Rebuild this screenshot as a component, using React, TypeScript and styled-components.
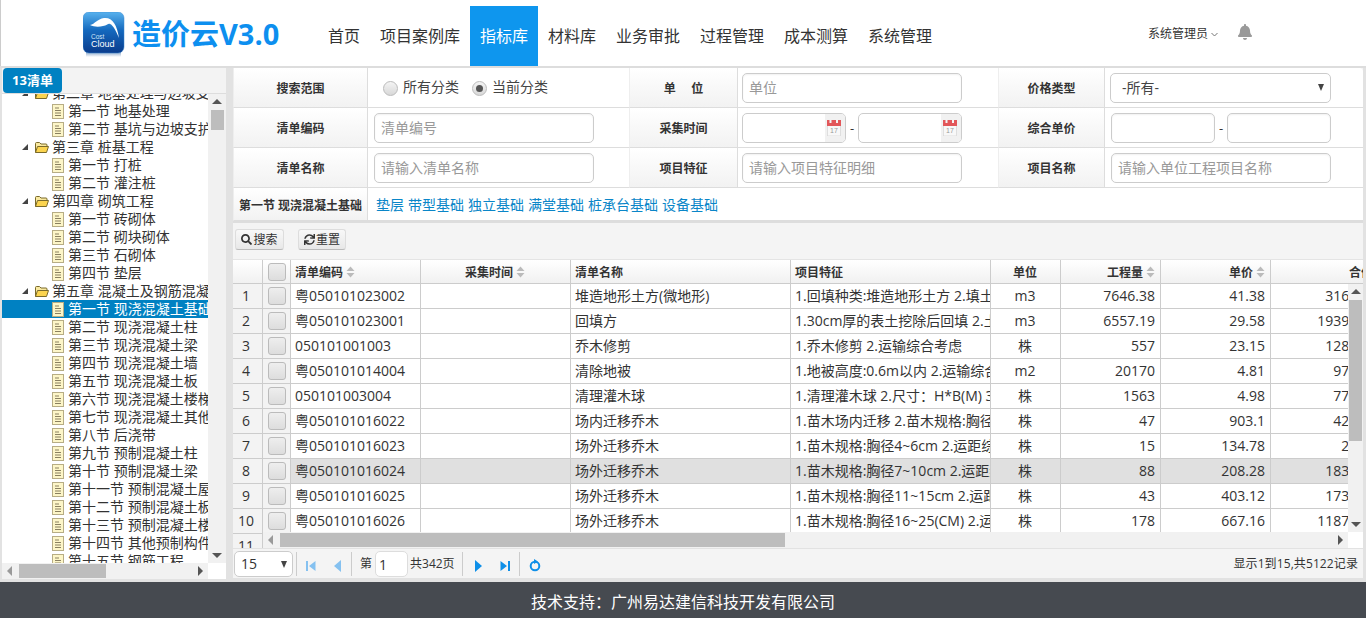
import React from "react";
import styled, { createGlobalStyle } from "styled-components";
import { FaBell, FaSearch, FaSync } from "react-icons/fa";

const Global = createGlobalStyle`
  html, body { margin: 0; padding: 0; background: #ddd; }
  body { font-family: "Open Sans", "Noto Sans CJK SC", sans-serif; font-size: 14px; color: #333; }
  * { box-sizing: border-box; }
  input { font-family: "Open Sans", "Noto Sans CJK SC", sans-serif; }
`;

const Page = styled.div`
  width: 1366px; height: 618px; display: flex; flex-direction: column; overflow: hidden; background: #ddd;
`;
const Header = styled.header`
  height: 66px; flex: none; display: flex; background: #fff; border-left: 1px solid #ccc; padding-left: 82px;
`;
const LogoWrap = styled.div`
  width: 42px; height: 46px; margin-top: 12px; flex: none;
`;
const Brand = styled.div`
  margin: 12px 0 0 7px; width: 186px; height: 44px; line-height: 44px; font-size: 29px; font-weight: 700; color: #0d8fef; white-space: nowrap;
`;
const Nav = styled.nav` display: flex; height: 60px; margin-top: 6px; `;
const NavItem = styled.div<{ $active?: boolean }>`
  padding: 0 10px; line-height: 60px; font-size: 16px; white-space: nowrap;
  color: ${p => (p.$active ? "#fff" : "#333")};
  background: ${p => (p.$active ? "#0e96ee" : "transparent")};
`;
const UserArea = styled.div`
  margin-left: auto; padding-right: 113px; display: flex; align-items: flex-start; height: 66px;
`;
const UserName = styled.div`
  margin-top: 25px; font-size: 12px; line-height: 18px; color: #333; display: flex; align-items: center; gap: 3px;
`;
const BellWrap = styled.div` margin: 24px 0 0 19px; color: #9a9a9a; font-size: 16px; line-height: 16px; `;

const Body = styled.div`
  flex: none; height: 514px; margin-top: 2px; display: flex; align-items: flex-start; padding-left: 2px; background: #e2e2e2;
`;
const Sidebar = styled.aside`
  width: 224px; height: 511px; flex: none; background: #f2f2f2; display: flex; flex-direction: column;
`;
const TabBar = styled.div`
  height: 26px; flex: none; background: #f3f3f3; border-bottom: 1px solid #ddd; padding-left: 1px;
`;
const Tab = styled.div`
  width: 59px; height: 25px; background: #0081c2; color: #fff; font-weight: 700; font-size: 13px; line-height: 25px; text-align: center; border-radius: 4px;
`;
const TreeArea = styled.div` height: 469px; flex: none; display: flex; background: #fff; `;
const TreeClip = styled.div` width: 206px; flex: none; overflow: hidden; `;
const TreeList = styled.div` margin-top: -10px; `;
const TreeRow = styled.div<{ $sel?: boolean; $chapter?: boolean }>`
  height: 18px; display: flex; align-items: center; white-space: nowrap; line-height: 18px; font-size: 14px;
  padding-left: ${p => (p.$chapter ? "20px" : "50px")};
  background: ${p => (p.$sel ? "#0081c2" : "transparent")};
  color: ${p => (p.$sel ? "#fff" : "#333")};
`;
const TreeArrow = styled.span`
  width: 0; height: 0; border-style: solid; border-width: 0 0 6px 6px; border-color: transparent transparent #444 transparent; margin-right: 6px; flex: none;
`;
const IconSlot = styled.span` flex: none; display: inline-flex; margin-right: 2px; `;
const LeafSlot = styled.span` flex: none; display: inline-flex; margin-right: 4px; `;

const VBar = styled.div<{ $w: number; $h?: number }>`
  width: ${p => p.$w}px; flex: none; background: #f1f1f1; display: flex; flex-direction: column; align-items: center; padding: 5px 0;
  height: ${p => (p.$h ? `${p.$h}px` : "auto")};
`;
const VThumb = styled.div<{ $h: number; $top: number }>`
  width: 13px; height: ${p => p.$h}px; margin-top: ${p => p.$top}px; background: #bdbdbd; flex: none;
`;
const ArrowUp = styled.span`
  width: 0; height: 0; border-left: 5px solid transparent; border-right: 5px solid transparent; border-bottom: 5px solid #555; flex: none;
`;
const ArrowDown = styled.span`
  width: 0; height: 0; border-left: 5px solid transparent; border-right: 5px solid transparent; border-top: 5px solid #555; margin-top: auto; flex: none;
`;
const HBarRow = styled.div<{ $h: number }>` height: ${p => p.$h}px; flex: none; display: flex; background: #fff; `;
const HBar = styled.div`
  flex: 1; background: #f1f1f1; display: flex; align-items: center; padding: 0 5px;
`;
const Corner = styled.div` width: 18px; flex: none; background: #fff; `;
const ArrowLeft = styled.span`
  width: 0; height: 0; border-top: 5px solid transparent; border-bottom: 5px solid transparent; border-right: 5px solid #9a9a9a; flex: none;
`;
const ArrowRight = styled.span`
  width: 0; height: 0; border-top: 5px solid transparent; border-bottom: 5px solid transparent; border-left: 5px solid #555; margin-left: auto; flex: none;
`;
const HThumb = styled.div<{ $w: number; $left: number }>`
  height: 14px; width: ${p => p.$w}px; margin-left: ${p => p.$left}px; background: #bdbdbd; flex: none;
`;

const Main = styled.main`
  margin-left: 7px; width: 1130px; height: 510px; flex: none; display: flex; flex-direction: column; background: #f4f4f4;
`;
const SearchGrid = styled.div`
  display: grid; flex: none; grid-template-columns: 135px 261px 109px 260px 107px 258px; grid-template-rows: 40px 40px 40px 33px;
  background: #fff; border-radius: 4px 4px 0 0; height: 154px; border-bottom: 1px solid #ddd;
`;
const Label = styled.div<{ $low?: boolean }>`
  display: flex; align-items: center; justify-content: center; font-weight: 700; font-size: 12px; white-space: pre; color: #333;
  background: linear-gradient(#fff, #f2f2f2); border-bottom: 1px solid #ddd; border-right: 1px solid #ddd; border-left: 1px solid #eee;
  padding-top: ${p => (p.$low ? "1px" : "0")};
`;
const Field = styled.div<{ $pad: number }>`
  display: flex; align-items: center; padding-left: ${p => p.$pad}px; border-bottom: 1px solid #ddd;
`;
const LinkField = styled(Field)`
  grid-column: 2 / 7; gap: 4px; white-space: nowrap; padding-top: 1px;
`;
const CatLink = styled.a` color: #0a86c8; font-size: 14px; line-height: 20px; `;
const RadioOption = styled.label`
  display: flex; align-items: center; gap: 5px; font-size: 14px; line-height: 18px; color: #444; margin-right: 13px;
`;
const RadioGroup = styled.div` display: flex; padding: 0 0 2px 10px; `;
const RadioDot = styled.span<{ $on?: boolean }>`
  width: 15px; height: 15px; border-radius: 50%; border: 1px solid #bbb; margin-top: 3px; flex: none; display: flex; align-items: center; justify-content: center;
  background: linear-gradient(#f4f4f4, #d8d8d8);
  &::after { content: ""; width: 7px; height: 7px; border-radius: 50%; background: ${p => (p.$on ? "#555" : "transparent")}; }
`;
const TextInput = styled.input<{ $w?: number }>`
  width: ${p => p.$w ?? 220}px; height: 30px; border: 1px solid #ccc; border-radius: 5px; padding: 0 6px; font-size: 14px; color: #333; outline: none;
  box-shadow: inset 0 1px 2px rgba(0,0,0,.06); background: #fff;
  &::placeholder { color: #999; opacity: 1; }
`;
const SelectBox = styled.div`
  width: 221px; height: 30px; border: 1px solid #ccc; border-radius: 5px; display: flex; align-items: center; justify-content: space-between;
  padding: 0 6px 0 11px; font-size: 14px; color: #444; background: #fff; line-height: 20px;
`;
const Caret = styled.span`
  width: 0; height: 0; border-left: 3.5px solid transparent; border-right: 3.5px solid transparent; border-top: 7px solid #444;
`;
const DateBox = styled.div`
  width: 104px; height: 30px; border: 1px solid #ccc; border-radius: 5px; overflow: hidden; display: flex; justify-content: flex-end; background: #fff;
`;
const DateIcon = styled.div`
  width: 20px; background: #f1f1f1; display: flex; align-items: center; justify-content: center; padding-right: 2px;
`;
const RangeDash = styled.span` width: 12px; text-align: center; font-size: 13px; color: #333; `;

const Toolbar = styled.div`
  flex: none; height: 37px; border-top: 1px solid #ddd; background: #f4f4f4; display: flex; padding: 6px 0 0 2px; gap: 14px;
`;
const ToolBtn = styled.button<{ $w: number }>`
  width: ${p => p.$w}px; height: 21px; padding: 0; border: 1px solid #ddd; border-bottom-color: #bbb; border-radius: 3px; background: linear-gradient(#f8f8f8, #e8e8e8);
  font-family: inherit; font-size: 12px; line-height: 18px; color: #333; display: flex; align-items: center; justify-content: center; gap: 1px;
  svg { font-size: 11px; }
`;

const TableArea = styled.div`
  flex: none; height: 289px; display: flex; flex-direction: column; background: #fff;
`;
const HeadRow = styled.div`
  height: 25px; flex: none; display: flex; overflow: hidden; background: linear-gradient(#fff, #f1f1f1); border-top: 1px solid #e4e4e4; border-bottom: 1px solid #ccc;
`;
const HeadCell = styled.div<{ $w: number; $align?: string }>`
  width: ${p => p.$w}px; flex: none; display: flex; align-items: center; gap: 3px; padding: 0 5px 0 4px; font-weight: 700; font-size: 12px; white-space: nowrap; border-right: 1px solid #ccc;
  justify-content: ${p => p.$align ?? "flex-start"};
`;
const Sort = styled.svg` flex: none; `;
const TableBody = styled.div` flex: 1; display: flex; min-height: 0; `;
const NumCol = styled.div` width: 30px; flex: none; overflow: hidden; background: #f3f3f3; `;
const NumCell = styled.div`
  height: 25px; line-height: 24px; text-align: center; border-bottom: 1px solid #ccc; border-right: 1px solid #ccc; font-size: 14px; padding-right: 3px;
`;
const DataCol = styled.div` width: 1085px; flex: none; display: flex; flex-direction: column; `;
const RowsClip = styled.div` height: 248px; flex: none; overflow: hidden; `;
const DataRow = styled.div<{ $on?: boolean }>`
  height: 25px; width: 1128px; display: flex; background: ${p => (p.$on ? "#e0e0e0" : "#fff")}; border-bottom: 1px solid #ccc;
`;
const Cell = styled.div<{ $w: number; $align?: string }>`
  width: ${p => p.$w}px; flex: none; padding: 0 5px 0 4px; line-height: 24px; font-size: 14px; white-space: nowrap; overflow: hidden; border-right: 1px solid #ccc;
  text-align: ${p => p.$align ?? "left"};
`;
const CheckCell = styled.div<{ $w: number }>`
  width: ${p => p.$w}px; flex: none; display: flex; align-items: center; justify-content: center; border-right: 1px solid #ccc; background: #f3f3f3;
`;
const HeadCheck = styled(CheckCell)` background: transparent; `;
const Check = styled.span`
  width: 18px; height: 18px; border: 1px solid #bbb; border-radius: 3px; background: linear-gradient(#eee, #ddd); flex: none;
`;

const Pager = styled.div`
  height: 30px; flex: none; display: flex; align-items: center; border-top: 1px solid #e2e2e2; background: #f4f4f4; padding: 1px 5px 0 1px; font-size: 14px;
`;
const PageSelect = styled.div`
  width: 59px; height: 26px; flex: none; background: #fff; border: 1px solid #ccc; border-radius: 5px; display: flex; align-items: center; justify-content: space-between; padding: 0 5px 0 6px; line-height: 20px;
`;
const PagerSep = styled.span<{ $l: number }>` width: 1px; height: 24px; background: #ccc; margin-left: ${p => p.$l}px; flex: none; `;
const PagerIcon = styled.span<{ $l: number }>` display: inline-flex; flex: none; margin: 3px 0 0 ${p => p.$l}px; `;
const PagerText = styled.span<{ $l: number }>` margin-left: ${p => p.$l}px; flex: none; font-size: 12px; line-height: 20px; white-space: nowrap; `;
const PageInput = styled.input`
  width: 33px; height: 26px; margin-left: 3px; flex: none; border: 1px solid #ddd; border-radius: 5px; padding: 0 3px; font-size: 14px; color: #333; background: #fff; outline: none;
`;
const PageInfo = styled.span` margin-left: auto; font-size: 12px; line-height: 18px; white-space: nowrap; letter-spacing: .1px; `;

const Footer = styled.footer`
  height: 36px; flex: none; background: #464a50; color: #fff; text-align: center; font-size: 16px; line-height: 40px;
`;

const Logo = () => (
  <svg width="42" height="46" viewBox="0 0 42 46">
    <defs>
      <linearGradient id="lg" x1="0" y1="0" x2="0" y2="1">
        <stop offset="0" stopColor="#58b2ee" />
        <stop offset=".45" stopColor="#1468bd" />
        <stop offset="1" stopColor="#0a3c8c" />
      </linearGradient>
      <linearGradient id="rf" x1="0" y1="0" x2="0" y2="1">
        <stop offset="0" stopColor="#8aa6c8" />
        <stop offset="1" stopColor="#fff" />
      </linearGradient>
    </defs>
    <rect x="3" y="40" width="35" height="5" fill="url(#rf)" />
    <rect x="0" y="0" width="41" height="41" rx="6" fill="url(#lg)" stroke="#3a86cf" strokeWidth=".5" />
    <path d="M7 13c5-1 7-6 14-7 8-1 13 6 15 20-3-7-6-13-9-14-2-1-3 2-7 2-4 1-9 1-13-1z" fill="#fff" />
    <text x="8" y="27" fontSize="6.5" fill="#cfe6fa" fontFamily="Liberation Sans">Cost</text>
    <text x="8" y="35" fontSize="9" fill="#fff" fontFamily="Liberation Sans">Cloud</text>
  </svg>
);
const Folder = () => (
  <svg width="16" height="13" viewBox="0 0 16 13">
    <path d="M1.5 11.5V2.5c0-.6.4-1 1-1h3l1.5 1.5h5c.6 0 1 .4 1 1v1" fill="#f9e9a0" stroke="#7a6a2a" />
    <path d="M1.5 11.5l2-6h11l-2 6z" fill="#fbd44f" stroke="#7a6a2a" strokeLinejoin="round" />
  </svg>
);
const Leaf = () => (
  <svg width="12" height="15" viewBox="0 0 12 15">
    <rect x=".5" y=".5" width="11" height="14" fill="#fdf6c8" stroke="#b7ad85" />
    <path d="M3 4h4M3 6.5h6M3 9h6M3 11.5h6" stroke="#8a8060" strokeWidth="1" />
  </svg>
);
const SortIcon = () => (
  <Sort width="9" height="12" viewBox="0 0 9 12">
    <path d="M4.5 0.5L8.5 5H.5zM4.5 11.5L.5 7h8z" fill="#bbb" />
  </Sort>
);
const Cal = () => (
  <svg width="14" height="17" viewBox="0 0 14 17">
    <rect x=".5" y="2" width="13" height="15" fill="#f8f8f8" stroke="#d5d5d5" strokeWidth=".7" />
    <rect x="0" y="1" width="14" height="6" fill="#e2575a" />
    <rect x="2.5" y="1" width="2" height="3" fill="#f4f4f4" />
    <rect x="9" y="1" width="2" height="3" fill="#f4f4f4" />
    <text x="3" y="14" fontSize="7" fill="#999" fontFamily="Liberation Sans">17</text>
  </svg>
);
const PagerGlyph = ({ kind, color }: { kind: "first" | "prev" | "next" | "last"; color: string }) => (
  <svg width="10" height="12" viewBox="0 0 10 12">
    {kind === "first" && <path d="M0 1h2v10H0zM9.5 1v10L3 6z" fill={color} />}
    {kind === "prev" && <path d="M9 0v12L2 6z" fill={color} />}
    {kind === "next" && <path d="M1 0v12l7-6z" fill={color} />}
    {kind === "last" && <path d="M8 1h2v10H8zM.5 1v10L7 6z" fill={color} />}
  </svg>
);
const Reload = () => (
  <svg width="12" height="13" viewBox="0 0 12 13">
    <circle cx="6" cy="7" r="4.3" fill="none" stroke="#0e8fe8" strokeWidth="2" />
    <path d="M5 0l4 2.5L5 5z" fill="#0e8fe8" />
  </svg>
);

const nav = ["首页", "项目案例库", "指标库", "材料库", "业务审批", "过程管理", "成本测算", "系统管理"];
const tree: [string, boolean, boolean?][] = [
  ["第二章 地基处理与边坡支护工程", true],
  ["第一节 地基处理", false],
  ["第二节 基坑与边坡支护", false],
  ["第三章 桩基工程", true],
  ["第一节 打桩", false],
  ["第二节 灌注桩", false],
  ["第四章 砌筑工程", true],
  ["第一节 砖砌体", false],
  ["第二节 砌块砌体", false],
  ["第三节 石砌体", false],
  ["第四节 垫层", false],
  ["第五章 混凝土及钢筋混凝土工程", true],
  ["第一节 现浇混凝土基础", false, true],
  ["第二节 现浇混凝土柱", false],
  ["第三节 现浇混凝土梁", false],
  ["第四节 现浇混凝土墙", false],
  ["第五节 现浇混凝土板", false],
  ["第六节 现浇混凝土楼梯", false],
  ["第七节 现浇混凝土其他构件", false],
  ["第八节 后浇带", false],
  ["第九节 预制混凝土柱", false],
  ["第十节 预制混凝土梁", false],
  ["第十一节 预制混凝土屋架", false],
  ["第十二节 预制混凝土板", false],
  ["第十三节 预制混凝土楼梯", false],
  ["第十四节 其他预制构件", false],
  ["第十五节 钢筋工程", false],
];
const links = ["垫层", "带型基础", "独立基础", "满堂基础", "桩承台基础", "设备基础"];
const rows = [
  ["粤050101023002", "堆造地形土方(微地形)", "1.回填种类:堆造地形土方 2.填土要求", "m3", "7646.38", "41.38", "316407.2"],
  ["粤050101023001", "回填方", "1.30cm厚的表土挖除后回填 2.土方运输", "m3", "6557.19", "29.58", "193961.68"],
  ["050101001003", "乔木修剪", "1.乔木修剪 2.运输综合考虑", "株", "557", "23.15", "12894.55"],
  ["粤050101014004", "清除地被", "1.地被高度:0.6m以内 2.运输综合考虑", "m2", "20170", "4.81", "97017.7"],
  ["050101003004", "清理灌木球", "1.清理灌木球 2.尺寸：H*B(M) 3.运输", "株", "1563", "4.98", "7783.74"],
  ["粤050101016022", "场内迁移乔木", "1.苗木场内迁移 2.苗木规格:胸径4~6cm", "株", "47", "903.1", "42445.7"],
  ["粤050101016023", "场外迁移乔木", "1.苗木规格:胸径4~6cm 2.运距综合考虑", "株", "15", "134.78", "2021.7"],
  ["粤050101016024", "场外迁移乔木", "1.苗木规格:胸径7~10cm 2.运距综合考虑", "株", "88", "208.28", "18328.64"],
  ["粤050101016025", "场外迁移乔木", "1.苗木规格:胸径11~15cm 2.运距综合考虑", "株", "43", "403.12", "17334.16"],
  ["粤050101016026", "场外迁移乔木", "1.苗木规格:胸径16~25(CM) 2.运距综合考虑", "株", "178", "667.16", "118754.48"],
];

export default function App() {
  return (
    <Page>
      <Global />
      <Header>
        <LogoWrap><Logo /></LogoWrap>
        <Brand>造价云V3.0</Brand>
        <Nav>
          {nav.map(n => <NavItem key={n} $active={n === "指标库"}>{n}</NavItem>)}
        </Nav>
        <UserArea>
          <UserName>
            系统管理员
            <svg width="7" height="5" viewBox="0 0 7 5"><path d="M.5 1l3 3 3-3" fill="none" stroke="#777" /></svg>
          </UserName>
          <BellWrap><FaBell /></BellWrap>
        </UserArea>
      </Header>
      <Body>
        <Sidebar>
          <TabBar><Tab>13清单</Tab></TabBar>
          <TreeArea>
            <TreeClip>
              <TreeList>
                {tree.map(([t, ch, sel], i) => (
                  <TreeRow key={i} $chapter={ch} $sel={sel}>
                    {ch ? <><TreeArrow /><IconSlot><Folder /></IconSlot></> : <LeafSlot><Leaf /></LeafSlot>}
                    {t}
                  </TreeRow>
                ))}
              </TreeList>
            </TreeClip>
            <VBar $w={18}>
              <ArrowUp />
              <VThumb $h={20} $top={6} />
              <ArrowDown />
            </VBar>
          </TreeArea>
          <HBarRow $h={16}>
            <HBar>
              <ArrowLeft />
              <HThumb $w={87} $left={7} />
              <ArrowRight />
            </HBar>
            <Corner />
          </HBarRow>
        </Sidebar>
        <Main>
          <SearchGrid>
            <Label>搜索范围</Label>
            <Field $pad={5}>
              <RadioGroup>
                <RadioOption><RadioDot />所有分类</RadioOption>
                <RadioOption><RadioDot $on />当前分类</RadioOption>
              </RadioGroup>
            </Field>
            <Label>单     位</Label>
            <Field $pad={4}><TextInput placeholder="单位" /></Field>
            <Label>价格类型</Label>
            <Field $pad={5}><SelectBox>-所有-<Caret /></SelectBox></Field>

            <Label>清单编码</Label>
            <Field $pad={6}><TextInput placeholder="清单编号" /></Field>
            <Label>采集时间</Label>
            <Field $pad={4}>
              <DateBox><DateIcon><Cal /></DateIcon></DateBox>
              <RangeDash>-</RangeDash>
              <DateBox><DateIcon><Cal /></DateIcon></DateBox>
            </Field>
            <Label>综合单价</Label>
            <Field $pad={6}>
              <TextInput $w={104} />
              <RangeDash>-</RangeDash>
              <TextInput $w={104} />
            </Field>

            <Label>清单名称</Label>
            <Field $pad={6}><TextInput placeholder="请输入清单名称" /></Field>
            <Label>项目特征</Label>
            <Field $pad={4}><TextInput placeholder="请输入项目特征明细" /></Field>
            <Label>项目名称</Label>
            <Field $pad={6}><TextInput placeholder="请输入单位工程项目名称" /></Field>

            <Label $low>第一节 现浇混凝土基础</Label>
            <LinkField $pad={8}>
              {links.map(l => <CatLink key={l}>{l}</CatLink>)}
            </LinkField>
          </SearchGrid>
          <Toolbar>
            <ToolBtn $w={49}><FaSearch />搜索</ToolBtn>
            <ToolBtn $w={48}><FaSync />重置</ToolBtn>
          </Toolbar>
          <TableArea>
            <HeadRow>
              <HeadCell $w={30} />
              <HeadCheck $w={28}><Check /></HeadCheck>
              <HeadCell $w={130}>清单编码<SortIcon /></HeadCell>
              <HeadCell $w={150} $align="center">采集时间<SortIcon /></HeadCell>
              <HeadCell $w={220}>清单名称</HeadCell>
              <HeadCell $w={200}>项目特征</HeadCell>
              <HeadCell $w={70} $align="center">单位</HeadCell>
              <HeadCell $w={100} $align="flex-end">工程量<SortIcon /></HeadCell>
              <HeadCell $w={110} $align="flex-end">单价<SortIcon /></HeadCell>
              <HeadCell $w={120} $align="flex-end">合价<SortIcon /></HeadCell>
            </HeadRow>
            <TableBody>
              <NumCol>
                {Array.from({ length: 11 }, (_, i) => <NumCell key={i}>{i + 1}</NumCell>)}
              </NumCol>
              <DataCol>
                <RowsClip>
                  {rows.map((r, i) => (
                    <DataRow key={i} $on={i === 7}>
                      <CheckCell $w={28}><Check /></CheckCell>
                      <Cell $w={130}>{r[0]}</Cell>
                      <Cell $w={150} />
                      <Cell $w={220}>{r[1]}</Cell>
                      <Cell $w={200}>{r[2]}</Cell>
                      <Cell $w={70} $align="center">{r[3]}</Cell>
                      <Cell $w={100} $align="right">{r[4]}</Cell>
                      <Cell $w={110} $align="right">{r[5]}</Cell>
                      <Cell $w={120} $align="right">{r[6]}</Cell>
                    </DataRow>
                  ))}
                </RowsClip>
                <HBarRow $h={16}>
                  <HBar>
                    <ArrowLeft />
                    <HThumb $w={505} $left={7} />
                    <ArrowRight />
                  </HBar>
                </HBarRow>
              </DataCol>
              <VBar $w={15} $h={248}>
                <ArrowUp />
                <VThumb $h={141} $top={6} />
                <ArrowDown />
              </VBar>
            </TableBody>
          </TableArea>
          <Pager>
            <PageSelect>15<Caret /></PageSelect>
            <PagerSep $l={3} />
            <PagerIcon $l={9}><PagerGlyph kind="first" color="#85c1f0" /></PagerIcon>
            <PagerIcon $l={16}><PagerGlyph kind="prev" color="#85c1f0" /></PagerIcon>
            <PagerSep $l={9} />
            <PagerText $l={8}>第</PagerText>
            <PageInput readOnly value="1" />
            <PagerText $l={2}>共342页</PagerText>
            <PagerSep $l={7} />
            <PagerIcon $l={11}><PagerGlyph kind="next" color="#0e8fe8" /></PagerIcon>
            <PagerIcon $l={16}><PagerGlyph kind="last" color="#0e8fe8" /></PagerIcon>
            <PagerSep $l={9} />
            <PagerIcon $l={9}><Reload /></PagerIcon>
            <PageInfo>显示1到15,共5122记录</PageInfo>
          </Pager>
        </Main>
      </Body>
      <Footer>技术支持：广州易达建信科技开发有限公司</Footer>
    </Page>
  );
}
